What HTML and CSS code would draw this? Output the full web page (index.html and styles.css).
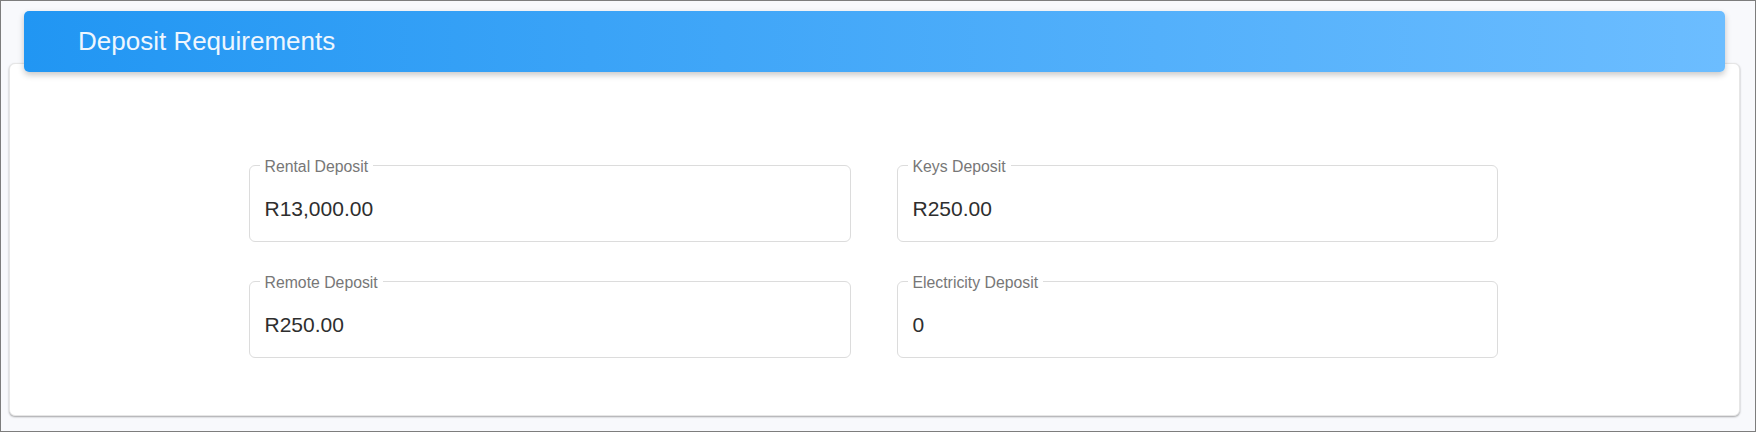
FILE: index.html
```html
<!DOCTYPE html>
<html>
<head>
<meta charset="utf-8">
<title>Deposit Requirements</title>
<link rel="stylesheet" href="styles.css">
</head>
<body>
<div class="page">
  <div class="header"><h2 class="title">Deposit Requirements</h2></div>
  <div class="card">
    <div class="grid">
      <div class="field"><span class="label">Rental Deposit</span><span class="value">R13,000.00</span></div>
      <div class="field"><span class="label">Keys Deposit</span><span class="value">R250.00</span></div>
      <div class="field"><span class="label">Remote Deposit</span><span class="value">R250.00</span></div>
      <div class="field"><span class="label">Electricity Deposit</span><span class="value">0</span></div>
    </div>
  </div>
</div>
</body>
</html>
```
FILE: styles.css
```css
html, body {
  margin: 0;
  padding: 0;
  background: #ffffff;
}
.page {
  box-sizing: border-box;
  height: 432px;
  border: 1px solid #7d7d7d;
  background: #f8f9fc;
  padding: 10px 15px 0 8px;
  font-family: "Liberation Sans", Arial, sans-serif;
}
.header {
  position: relative;
  z-index: 1;
  height: 61px;
  margin: 0 15px -9px 15px;
  border-radius: 5px;
  background: linear-gradient(90deg, #2196f3 0%, #6cbdff 100%);
  box-shadow: 0 3px 6px rgba(0, 0, 0, 0.22);
  display: flex;
  align-items: center;
  padding-left: 54px;
}
.title {
  margin: 0;
  font-size: 26px;
  font-weight: 400;
  color: #eef6fe;
}
.card {
  background: #ffffff;
  border: 1px solid #e6e6e6;
  border-radius: 6px;
  box-shadow: 0 1px 2px rgba(0, 0, 0, 0.35);
  padding: 101px 3px 57px 0;
}
.grid {
  display: grid;
  grid-template-columns: 602px 601px;
  column-gap: 46px;
  row-gap: 39px;
  justify-content: center;
}
.field {
  position: relative;
  box-sizing: border-box;
  height: 77px;
  border: 1px solid #dcdcdc;
  border-radius: 6px;
  padding: 10px 0 0 15px;
  display: flex;
  align-items: center;
}
.label {
  position: absolute;
  left: 10px;
  top: -9px;
  padding: 0 5px;
  background: #ffffff;
  font-size: 15.8px;
  line-height: 19px;
  color: #777777;
}
.value {
  font-size: 21px;
  color: #2e2e2e;
}
```
